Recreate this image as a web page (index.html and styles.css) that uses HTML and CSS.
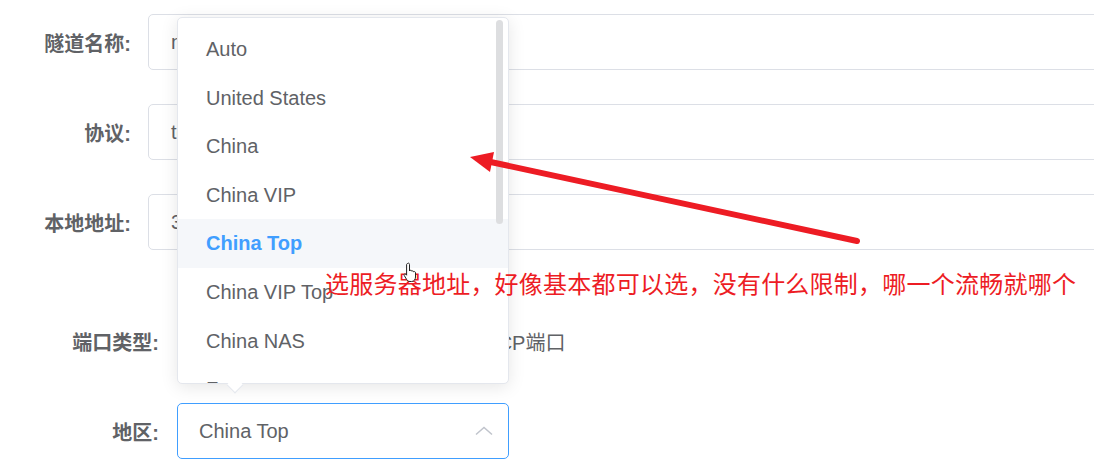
FILE: index.html
```html
<!DOCTYPE html>
<html lang="zh-CN">
<head>
    <meta charset="UTF-8">
    <meta name="viewport" content="width=device-width, initial-scale=1.0">
    <title>隧道设置</title>
    <link rel="stylesheet" href="styles.css">
</head>
<body>
    <form class="tunnel-form">
        <div class="form-item">
            <label class="form-label">隧道名称:</label>
            <div class="input">nas-web</div>
        </div>
        <div class="form-item">
            <label class="form-label">协议:</label>
            <div class="input">tcp</div>
        </div>
        <div class="form-item tall">
            <label class="form-label">本地地址:</label>
            <div class="input">3389</div>
        </div>
        <div class="form-item wide">
            <label class="form-label">端口类型:</label>
            <div class="radio-group">
                <span class="radio"><i class="radio-dot"></i>HTTP端口</span>
                <span class="radio"><i class="radio-dot"></i>UDP端口</span>
                <span class="radio"><i class="radio-dot"></i>TCP端口</span>
            </div>
        </div>
        <div class="form-item wide">
            <label class="form-label">地区:</label>
            <div class="select-wrap">
                <div class="select">
                    <span>China Top</span>
                    <svg class="chevron" width="18" height="10" viewBox="0 0 18 10">
                        <path d="M1 8.5 L9 1.5 L17 8.5" fill="none" stroke="#c0c4cc" stroke-width="1.5"/>
                    </svg>
                </div>
                <div class="dropdown">
                    <ul class="options">
                        <li>Auto</li>
                        <li>United States</li>
                        <li>China</li>
                        <li>China VIP</li>
                        <li class="selected">China Top</li>
                        <li>China VIP Top</li>
                        <li>China NAS</li>
                        <li>France</li>
                        <li>Germany</li>
                    </ul>
                    <div class="scrollbar"></div>
                </div>
                <div class="popper-arrow"></div>
            </div>
        </div>
    </form>

    <!-- annotation drawn over the screenshot -->
    <svg class="annotation" width="1094" height="469" viewBox="0 0 1094 469">
        <line x1="857" y1="241" x2="486" y2="161" stroke="#ed1c24" stroke-width="6" stroke-linecap="round"/>
        <polygon points="470,157 494,152 490,172" fill="#ed1c24"/>
    </svg>
    <div class="note">选服务器地址，好像基本都可以选，没有什么限制，哪一个流畅就哪个</div>

    <svg class="cursor" width="16" height="22" viewBox="0 0 16 22">
        <path d="M4.5 1.5 C5.5 0.8 6.5 1.2 6.5 2.5 L6.5 9 L7 8.5 C7.8 8 8.7 8.3 8.8 9.2 C9.5 8.6 10.5 8.9 10.6 9.8 C11.3 9.3 12.4 9.6 12.5 10.6 L12.5 15 C12.5 17.5 11 19.5 8.5 19.5 L7 19.5 C5.3 19.5 4.3 18.6 3.5 17.3 L1.2 13.4 C0.8 12.6 1.3 11.8 2.2 12 C2.8 12.1 3.3 12.7 3.6 13.2 L3.6 2.5 C3.6 2 4 1.7 4.5 1.5 Z" fill="#fff" stroke="#222" stroke-width="1"/>
    </svg>
</body>
</html>
```
FILE: styles.css
```css
html {
    overflow: hidden;
}
body {
    margin: 0;
    padding: 0;
    background: #fff;
    font-family: 'Liberation Sans', 'Noto Sans CJK SC', sans-serif;
    color: #606266;
    overflow: hidden;
    width: 1094px;
    height: 469px;
    position: relative;
}
.tunnel-form {
    width: 1200px;
    padding-top: 14px;
}
.form-item {
    display: flex;
    align-items: center;
    height: 56px;
    margin-bottom: 34px;
}
.form-item:last-child {
    margin-bottom: 0;
}
.form-item.tall {
    margin-bottom: 63px;
}
.form-label {
    width: 148px;
    box-sizing: border-box;
    padding-right: 17px;
    text-align: right;
    font-size: 20px;
    font-weight: bold;
    color: #606266;
    flex-shrink: 0;
}
.form-item.wide .form-label {
    width: 177px;
    padding-right: 18px;
}
.input {
    flex: 1;
    height: 56px;
    box-sizing: border-box;
    border: 1px solid #dcdfe6;
    border-radius: 5px;
    padding-left: 22px;
    font-size: 20px;
    line-height: 54px;
    color: #606266;
}
.radio-group {
    display: flex;
    gap: 22px;
    font-size: 20px;
}
.radio {
    display: flex;
    align-items: center;
    gap: 10px;
}
.radio-dot {
    width: 18px;
    height: 18px;
    border: 1px solid #dcdfe6;
    border-radius: 50%;
}
.select-wrap {
    position: relative;
}
.select {
    width: 332px;
    height: 56px;
    box-sizing: border-box;
    border: 1px solid #409eff;
    border-radius: 5px;
    padding: 0 15px 0 21px;
    display: flex;
    align-items: center;
    justify-content: space-between;
    font-size: 20px;
    color: #606266;
}
.dropdown {
    position: absolute;
    left: 0;
    bottom: 75px;
    width: 332px;
    height: 367px;
    box-sizing: border-box;
    background: #fff;
    border: 1px solid #e4e7ed;
    border-radius: 5px;
    box-shadow: 0 3px 17px rgba(0, 0, 0, 0.1);
    overflow: hidden;
}
.options {
    list-style: none;
    margin: 0;
    padding: 7px 0 0;
}
.options li {
    height: 48.6px;
    line-height: 49.6px;
    padding-left: 28px;
    font-size: 20px;
    color: #606266;
}
.options li.selected {
    background: #f5f7fa;
    color: #409eff;
    font-weight: bold;
}
.scrollbar {
    position: absolute;
    top: 2px;
    right: 5px;
    width: 7px;
    height: 204px;
    border-radius: 4px;
    background: #dddee0;
}
.popper-arrow {
    position: absolute;
    left: 52px;
    bottom: 68px;
    width: 11px;
    height: 11px;
    background: #fff;
    border-right: 1px solid #e4e7ed;
    border-bottom: 1px solid #e4e7ed;
    transform: rotate(45deg);
}
.annotation {
    position: absolute;
    left: 0;
    top: 0;
    pointer-events: none;
}
.note {
    position: absolute;
    left: 325px;
    top: 266px;
    font-family: 'Noto Sans CJK SC', sans-serif;
    font-size: 24px;
    line-height: 34px;
    letter-spacing: 0.23px;
    color: #ed1c24;
    white-space: nowrap;
}
.cursor {
    position: absolute;
    left: 403px;
    top: 262px;
}
```
